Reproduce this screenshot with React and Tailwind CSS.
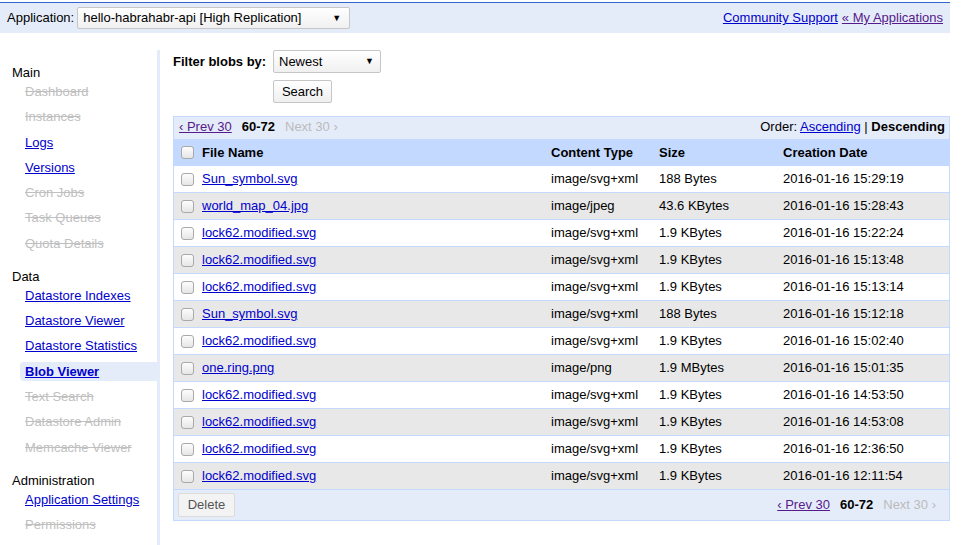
import React from "react";

const F = { fontFamily: '"Liberation Sans", Arial, sans-serif' };

const rows = [
  ["Sun_symbol.svg", "image/svg+xml", "188 Bytes", "2016-01-16 15:29:19"],
  ["world_map_04.jpg", "image/jpeg", "43.6 KBytes", "2016-01-16 15:28:43"],
  ["lock62.modified.svg", "image/svg+xml", "1.9 KBytes", "2016-01-16 15:22:24"],
  ["lock62.modified.svg", "image/svg+xml", "1.9 KBytes", "2016-01-16 15:13:48"],
  ["lock62.modified.svg", "image/svg+xml", "1.9 KBytes", "2016-01-16 15:13:14"],
  ["Sun_symbol.svg", "image/svg+xml", "188 Bytes", "2016-01-16 15:12:18"],
  ["lock62.modified.svg", "image/svg+xml", "1.9 KBytes", "2016-01-16 15:02:40"],
  ["one.ring.png", "image/png", "1.9 MBytes", "2016-01-16 15:01:35"],
  ["lock62.modified.svg", "image/svg+xml", "1.9 KBytes", "2016-01-16 14:53:50"],
  ["lock62.modified.svg", "image/svg+xml", "1.9 KBytes", "2016-01-16 14:53:08"],
  ["lock62.modified.svg", "image/svg+xml", "1.9 KBytes", "2016-01-16 12:36:50"],
  ["lock62.modified.svg", "image/svg+xml", "1.9 KBytes", "2016-01-16 12:11:54"],
];

const nav = [
  { h: "Main", items: [["Dashboard", 0], ["Instances", 0], ["Logs", 1], ["Versions", 1], ["Cron Jobs", 0], ["Task Queues", 0], ["Quota Details", 0]] },
  { h: "Data", items: [["Datastore Indexes", 1], ["Datastore Viewer", 1], ["Datastore Statistics", 1], ["Blob Viewer", 2], ["Text Search", 0], ["Datastore Admin", 0], ["Memcache Viewer", 0]] },
  { h: "Administration", items: [["Application Settings", 1], ["Permissions", 0]] },
];

function Check() {
  return (
    <span className="inline-block w-[13px] h-[13px] rounded-[3px] border border-[#a9a9a9] bg-gradient-to-b from-[#fdfdfd] to-[#e6e6e6]" />
  );
}

function Arrow() {
  return <span className="text-[9px] text-black leading-none">▼</span>;
}

function Pager() {
  return (
    <div className="flex items-center">
      <a className="text-[#551a8b] underline">‹ Prev 30</a>
      <span className="ml-[10px] font-bold text-black">60-72</span>
      <span className="ml-[10px] text-[#bbbbbb]">Next 30 ›</span>
    </div>
  );
}

export default function App() {
  return (
    <div style={F} className="w-[950px] text-[13px] text-black bg-white min-h-[545px]">
      <div className="h-[31px] mt-[2px] border-t border-[#3366cc] bg-[#e5ecf9] flex items-center justify-between pl-[7px] pr-[7px]">
        <div className="flex items-center">
          <span>Application:</span>
          <div className="ml-[3px] w-[273px] h-[22px] rounded-[2px] border border-[#c6c6c6] bg-gradient-to-b from-white to-[#f0f0f0] flex items-center justify-between pl-[5px] pr-[8px]">
            <span>hello-habrahabr-api [High Replication]</span>
            <Arrow />
          </div>
        </div>
        <div className="flex items-center">
          <a className="text-[#0000cc] underline">Community Support</a>
          <a className="ml-[4px] text-[#551a8b] underline">« My Applications</a>
        </div>
      </div>
      <div className="flex">
        <div className="w-[157px] shrink-0 pt-[32px]">
          {nav.map((s, si) => (
            <div key={si} className={si > 0 ? "mt-[16px]" : ""}>
              <div className="pl-[12px] h-[15px] leading-[15px]">{s.h}</div>
              <div className="mt-[2px]">
                {s.items.map(([t, k], i) => (
                  <div
                    key={i}
                    className={
                      "h-[19px] leading-[19px] pl-[5px] ml-[20px] " +
                      (i > 0 ? "mt-[6.3px] " : "") +
                      (k === 2 ? "bg-[#e5ecf9] rounded-l-[4px]" : "")
                    }
                  >
                    {k === 0 && <span className="text-[#c0c0c0] line-through">{t}</span>}
                    {k === 1 && <a className="text-[#0000cc] underline">{t}</a>}
                    {k === 2 && <a className="text-[#0000cc] underline font-bold">{t}</a>}
                  </div>
                ))}
              </div>
            </div>
          ))}
        </div>
        <div className="mt-[17px] border-l-[3px] border-[#e5ecf9] pl-[13px] flex-1 min-h-[495px]">
          <div className="flex items-start">
            <span className="font-bold mt-[2px] w-[100px]">Filter blobs by:</span>
            <div className="w-[108px] h-[23px] rounded-[2px] border border-[#c6c6c6] bg-gradient-to-b from-white to-[#f0f0f0] flex items-center justify-between pl-[5px] pr-[6px]">
              <span>Newest</span>
              <Arrow />
            </div>
          </div>
          <div className="ml-[100px] mt-[7px] w-[59px] h-[23px] rounded-[2px] border border-[#c6c6c6] bg-gradient-to-b from-white to-[#efefef] flex items-center justify-center">
            Search
          </div>
          <div className="mt-[13px] border border-[#c3d9ff]">
            <div className="h-[22px] pb-[2px] bg-[#e5ecf9] flex items-center justify-between pl-[5px] pr-[4px]">
              <Pager />
              <div>
                Order: <a className="text-[#0000cc] underline">Ascending</a> | <b>Descending</b>
              </div>
            </div>
            <div className="grid grid-cols-[28px_349px_108px_124px_1fr] h-[27px] items-center bg-[#c3d9ff] font-bold">
              <div className="pl-[7px] flex items-center"><Check /></div>
              <div>File Name</div>
              <div>Content Type</div>
              <div>Size</div>
              <div>Creation Date</div>
            </div>
            {rows.map((r, i) => (
              <div
                key={i}
                className={
                  "grid grid-cols-[28px_349px_108px_124px_1fr] h-[27px] items-center border-b border-[#c3d9ff] " +
                  (i % 2 === 1 ? "bg-[#e8e8e8]" : "bg-white")
                }
              >
                <div className="pl-[7px] flex items-center"><Check /></div>
                <div><a className="text-[#0000cc] underline">{r[0]}</a></div>
                <div>{r[1]}</div>
                <div>{r[2]}</div>
                <div>{r[3]}</div>
              </div>
            ))}
            <div className="h-[30px] bg-[#e5ecf9] flex items-center justify-between pl-[4px] pr-[13px]">
              <div className="w-[57px] h-[24px] rounded-[2px] border border-[#dcdcdc] bg-[#f3f3f3] text-[#555] flex items-center justify-center">
                Delete
              </div>
              <Pager />
            </div>
          </div>
        </div>
      </div>
    </div>
  );
}
